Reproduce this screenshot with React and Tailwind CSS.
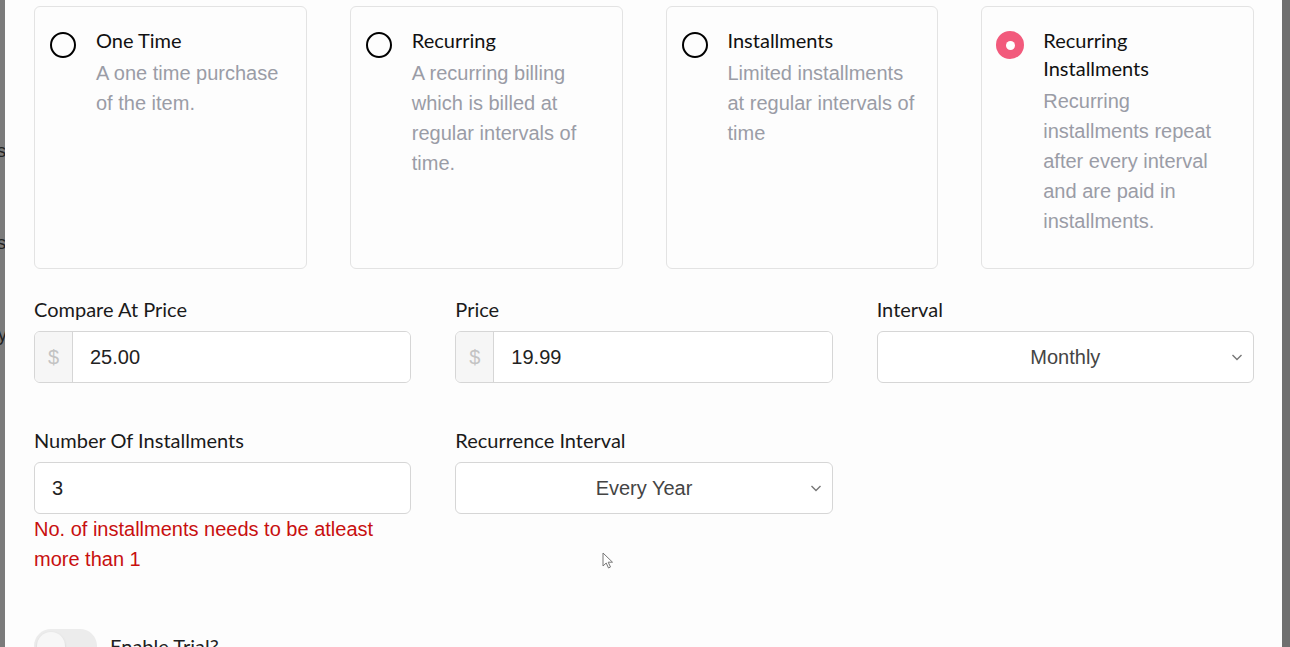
import { useState } from 'react'

const plans = [
  {
    id: 'one-time',
    title: 'One Time',
    description: 'A one time purchase of the item.',
  },
  {
    id: 'recurring',
    title: 'Recurring',
    description: 'A recurring billing which is billed at regular intervals of time.',
  },
  {
    id: 'installments',
    title: 'Installments',
    description: 'Limited installments at regular intervals of time',
  },
  {
    id: 'recurring-installments',
    title: 'Recurring Installments',
    description:
      'Recurring installments repeat after every interval and are paid in installments.',
  },
]

const labelFont = { fontFamily: 'Lato, "Noto Sans", sans-serif' }

function Radio({ checked }) {
  return (
    <span className="mt-[5px] flex h-[28px] w-[26px] shrink-0 items-center justify-center">
      {checked ? (
        <span className="flex h-[28px] w-[28px] shrink-0 items-center justify-center rounded-full bg-[#f25a7c]">
          <span className="h-[9px] w-[9px] rounded-full bg-white" />
        </span>
      ) : (
        <span className="h-[26px] w-[26px] shrink-0 rounded-full border-[2.5px] border-black" />
      )}
    </span>
  )
}

function PlanCard({ plan, checked, onSelect }) {
  return (
    <button
      type="button"
      onClick={onSelect}
      className="flex h-[263px] items-start gap-[20px] rounded-md border border-[#e3e3e3] bg-[#fdfdfd] pl-[15px] pt-[19px] text-left"
    >
      <Radio checked={checked} />
      <div className="w-[190px]">
        <p className="text-[20px] leading-[28px] text-[#111]" style={labelFont}>
          {plan.title}
        </p>
        <p className="mt-[4px] text-[20px] leading-[30px] text-[#9a9ca6]">
          {plan.description}
        </p>
      </div>
    </button>
  )
}

function Label({ children }) {
  return (
    <p className="text-[20px] leading-[28px] text-[#1a1a1a]" style={labelFont}>
      {children}
    </p>
  )
}

function PriceInput({ value }) {
  return (
    <div className="mt-[8px] flex h-[52px] overflow-hidden rounded-md border border-[#d6d6d6] bg-white">
      <span className="flex w-[38px] items-center justify-center border-r border-[#d6d6d6] bg-[#f6f6f6] text-[20px] text-[#c3c3c3]">
        $
      </span>
      <input
        className="flex-1 bg-white pl-[17px] text-[20px] text-[#222] outline-none"
        defaultValue={value}
      />
    </div>
  )
}

function Select({ value }) {
  return (
    <div className="relative mt-[8px] flex h-[52px] items-center justify-center rounded-md border border-[#d6d6d6] bg-white">
      <span className="text-[20px] text-[#444]">{value}</span>
      <svg
        className="absolute right-[9px] top-1/2 -translate-y-1/2"
        width="14"
        height="14"
        viewBox="0 0 14 14"
        fill="none"
        stroke="#777"
        strokeWidth="1.4"
      >
        <path d="M2.5 5l4.5 4.5L11.5 5" />
      </svg>
    </div>
  )
}

export default function App() {
  const [selected, setSelected] = useState('recurring-installments')

  return (
    <div
      className="flex h-[647px] w-full overflow-hidden bg-[#fdfdfd]"
      style={{ fontFamily: '"Liberation Sans", Arial, sans-serif' }}
    >
      <div className="relative w-[5px] shrink-0 overflow-hidden bg-[#7b7b7b]">
        <span className="absolute left-[-8px] top-[138px] text-[18px] text-[#222]">ts</span>
        <span className="absolute left-[-8px] top-[230px] text-[18px] text-[#222]">ts</span>
        <span className="absolute left-[-8px] top-[322px] text-[18px] text-[#222]">ry</span>
      </div>

      <main className="relative flex-1 pl-[29px] pr-[28px] pt-[6px]">
        <div className="grid grid-cols-4 gap-[43px]">
          {plans.map((plan) => (
            <PlanCard
              key={plan.id}
              plan={plan}
              checked={selected === plan.id}
              onSelect={() => setSelected(plan.id)}
            />
          ))}
        </div>

        <div className="mt-[26px] grid grid-cols-3 gap-x-[44px]">
          <div>
            <Label>Compare At Price</Label>
            <PriceInput value="25.00" />
          </div>
          <div>
            <Label>Price</Label>
            <PriceInput value="19.99" />
          </div>
          <div>
            <Label>Interval</Label>
            <Select value="Monthly" />
          </div>
        </div>

        <div className="mt-[43px] grid grid-cols-3 gap-x-[44px]">
          <div>
            <Label>Number Of Installments</Label>
            <div className="mt-[8px] flex h-[52px] rounded-md border border-[#d6d6d6] bg-white">
              <input
                className="flex-1 rounded-md pl-[17px] text-[20px] text-[#222] outline-none"
                defaultValue="3"
              />
            </div>
            <p className="text-[20px] leading-[30px] text-[#c80f0f]">
              No. of installments needs to be atleast more than 1
            </p>
          </div>
          <div>
            <Label>Recurrence Interval</Label>
            <Select value="Every Year" />
          </div>
        </div>

        <div className="mt-[55px] flex items-center gap-[13px]">
          <span className="relative h-[34px] w-[63px] rounded-full bg-[#ececec]">
            <span className="absolute left-[3px] top-[3px] h-[28px] w-[28px] rounded-full bg-[#f7f7f7] shadow-sm" />
          </span>
          <span className="text-[20px] text-[#222]" style={labelFont}>
            Enable Trial?
          </span>
        </div>

        <svg
          className="absolute left-[597px] top-[552px]"
          width="12"
          height="17"
          viewBox="0 0 12 17"
        >
          <path d="M1 1v13l3.2-3 2.3 5 2-1-2.3-4.8H10.5z" fill="white" stroke="#777" strokeWidth="1" />
        </svg>
      </main>

      <div className="w-[8px] shrink-0 bg-[#6f6f6f]" />
    </div>
  )
}
